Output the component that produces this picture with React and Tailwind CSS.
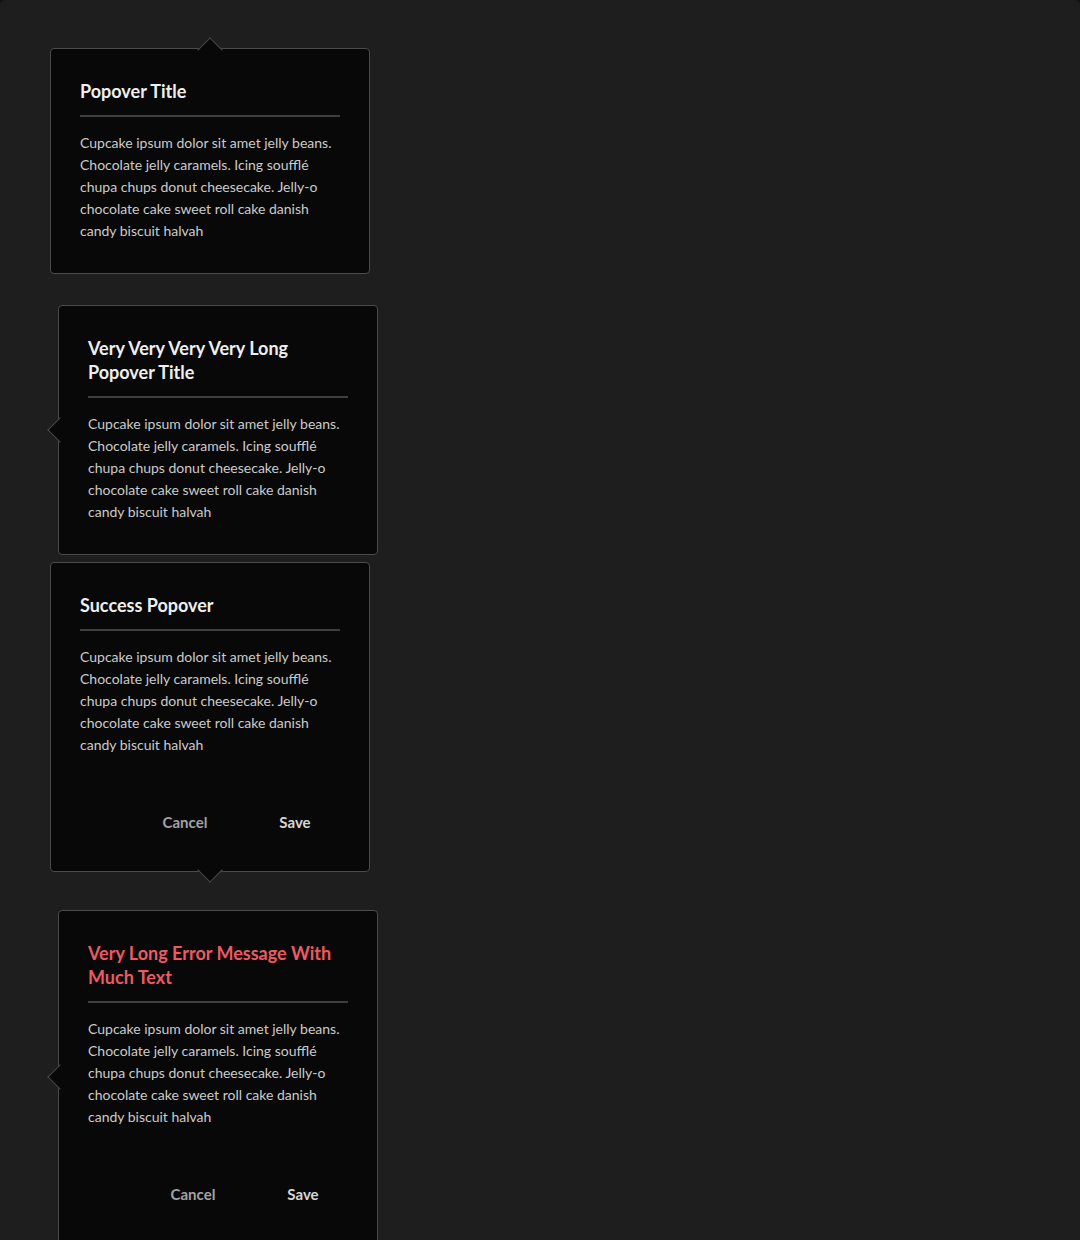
import React from 'react';

const bodyLines = [
  'Cupcake ipsum dolor sit amet jelly beans.',
  'Chocolate jelly caramels. Icing soufflé',
  'chupa chups donut cheesecake. Jelly-o',
  'chocolate cake sweet roll cake danish',
  'candy biscuit halvah',
];

const Tip = ({ side }) => {
  // small rotated square that pokes out of the popover edge
  if (side === 'top') {
    return (
      <div className="absolute left-1/2 -top-[8px] -ml-[9px] w-[18px] h-[18px] rotate-45 bg-[#080808] border-l border-t border-[#4b4b4b]" />
    );
  }
  if (side === 'bottom') {
    return (
      <div className="absolute left-1/2 -bottom-[8px] -ml-[9px] w-[18px] h-[18px] rotate-45 bg-[#080808] border-r border-b border-[#4b4b4b]" />
    );
  }
  return (
    <div className="absolute top-1/2 -left-[8px] -mt-[9px] w-[18px] h-[18px] rotate-45 bg-[#080808] border-l border-b border-[#4b4b4b]" />
  );
};

const Popover = ({ title, tip, error, footer, className }) => (
  <div
    className={
      'relative w-[320px] rounded-[4px] border border-[#4b4b4b] bg-[#080808] px-[29px] pt-[30px] ' +
      (footer ? 'pb-[33px] ' : 'pb-[31px] ') +
      className
    }
  >
    <Tip side={tip} />
    <h2
      className={
        'text-[18px] leading-[24px] font-bold ' +
        (error ? 'text-[#ec5a62]' : 'text-[#efefef]')
      }
    >
      {title}
    </h2>
    <div className="mt-[12px] h-[2px] bg-[#3f3f3f]" />
    <p className="mt-[15px] text-[14px] leading-[22px] text-[#cbcbcb]">
      {bodyLines.map((line) => (
        <span key={line} className="block whitespace-nowrap">
          {line}
        </span>
      ))}
    </p>
    {footer && (
      <div className="mt-[50px] flex justify-end gap-[20px]">
        <button className="w-[90px] h-8 text-[15px] font-bold text-[#a2a2a2]">Cancel</button>
        <button className="w-[90px] h-8 text-[15px] font-bold text-[#d6d6d6]">Save</button>
      </div>
    )}
  </div>
);

export default function App() {
  return (
    <div className="bg-[#111111] min-h-[1240px]" style={{ fontFamily: 'Lato, "Open Sans", sans-serif' }}>
      <div className="min-h-[1240px] overflow-hidden rounded-t-[5px] bg-[#1e1e1e] pl-[50px] pt-[48px]">
        <Popover title="Popover Title" tip="top" />
        <Popover
          title={<>Very Very Very Very Long<br />Popover Title</>}
          tip="left"
          className="ml-[8px] mt-[31px]"
        />
        <Popover title="Success Popover" tip="bottom" footer className="mt-[7px]" />
        <Popover
          title={<>Very Long Error Message With<br />Much Text</>}
          tip="left"
          error
          footer
          className="ml-[8px] mt-[38px]"
        />
      </div>
    </div>
  );
}
